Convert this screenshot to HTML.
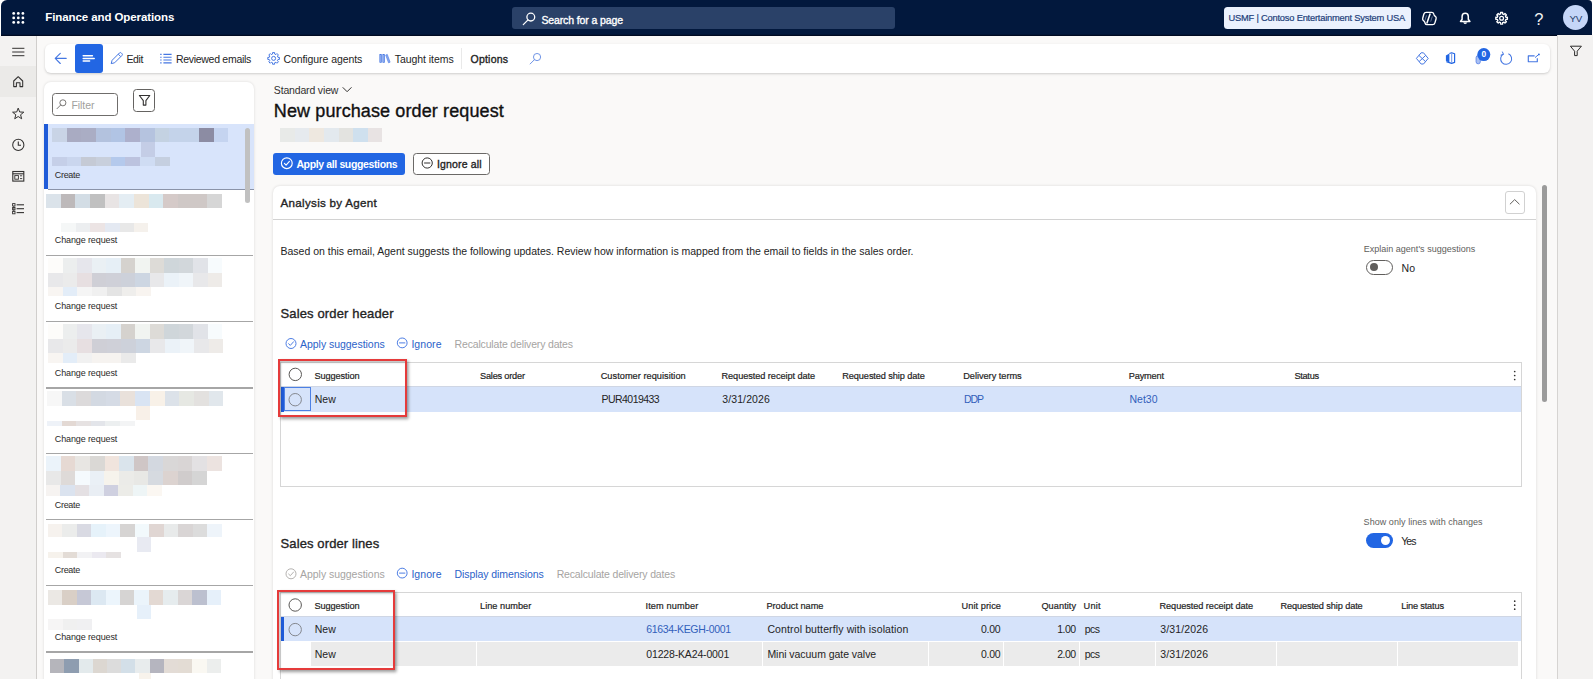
<!DOCTYPE html>
<html lang="en"><head><meta charset="utf-8"><title>New purchase order request - Finance and Operations</title>
<style>
*{box-sizing:border-box;margin:0;padding:0}
html,body{width:1593px;height:679px;overflow:hidden;background:#fff}
body{font-family:"Liberation Sans",Arial,sans-serif;position:relative}
#root{position:absolute;left:0;top:0;width:1593px;height:679px;overflow:hidden;background:#faf9f8}
#root div,#root span,#root svg{position:absolute}
.t{white-space:pre;line-height:1;display:block}
.px{}
svg{overflow:visible}
.sep{left:46.3px;width:206.4px;height:1.25px;background:#a6a6a6}
.gc{top:641.8px;height:24.1px;background:#ebebeb}
</style></head>
<body><div id="root">

<div style="left:0;top:0;width:1593px;height:36px;background:#fff"></div>
<div style="left:1px;top:0;width:1591px;height:35.55px;background:#02183d;border-radius:6px 4px 0 0;box-shadow:inset 0 -1.2px 0 #000a22"></div>
<div style="left:512px;top:7px;width:382.7px;height:22px;background:#2a4168;border-radius:3px"></div>
<div style="left:1223.5px;top:6.6px;width:187px;height:22.5px;background:#ebf1fd;border-radius:3.5px"></div>
<div style="left:1563.2px;top:5.2px;width:25px;height:25px;border-radius:50%;background:#c5d6f8"></div>

<div style="left:0;top:35.5px;width:36.5px;height:644px;background:#f3f2f1;border-right:1px solid #d0cecc"></div>
<div style="left:0;top:66.2px;width:36px;height:30.8px;background:#ebeae8"></div>
<div style="left:1557px;top:35.4px;width:36px;height:644px;background:#f3f2f1;border-left:1px solid #d6d4d2"></div>

<div style="left:44.5px;top:43.9px;width:1505.3px;height:29.4px;background:#fff;border-radius:6px;box-shadow:0 1px 2.5px rgba(0,0,0,.18)"></div>
<div style="left:74.8px;top:43.5px;width:28px;height:29.7px;background:#2266e3;border-radius:3px"></div>
<div style="left:461px;top:48px;width:1px;height:21px;background:#e9e9e9"></div>

<div style="left:44.3px;top:81.8px;width:209.4px;height:610px;background:#fff;border-radius:7px;box-shadow:0 0 3px rgba(0,0,0,.13)"></div>
<div style="left:52.2px;top:93.3px;width:65.7px;height:22.4px;background:#fff;border:1px solid #6f6d6b;border-radius:3.5px"></div>
<div style="left:132.7px;top:89.2px;width:22.8px;height:22.5px;background:#fff;border:1px solid #656361;border-radius:3.5px"></div>
<div style="left:44.3px;top:124.2px;width:209.4px;height:65px;background:#d8e4fb"></div>
<div style="left:44.3px;top:124.2px;width:3.4px;height:65px;background:#1f5bd8"></div>
<div class="sep" style="top:189px;left:47.7px;width:206px;background:#8a93a8"></div>
<div class="sep" style="top:255.2px"></div>
<div class="sep" style="top:321.2px"></div>
<div class="sep" style="top:387.3px"></div>
<div class="sep" style="top:453.2px"></div>
<div class="sep" style="top:519.2px"></div>
<div class="sep" style="top:585.2px"></div>
<div class="sep" style="top:651.4px"></div>
<div style="left:244.8px;top:127.5px;width:5.3px;height:75.8px;background:#c1c1c1;border-radius:3px"></div>

<div style="left:273px;top:152.9px;width:132.2px;height:22.2px;background:#2266e3;border-radius:3px"></div>
<div style="left:413.2px;top:152.9px;width:76.4px;height:22.2px;background:#fff;border:1px solid #6b6967;border-radius:3.5px"></div>

<div style="left:272.6px;top:186px;width:1263.2px;height:520px;background:#fff;border-radius:7px;box-shadow:0 0 3px rgba(0,0,0,.14)"></div>
<div style="left:273px;top:219.2px;width:1262.5px;height:1px;background:#d2d2d2"></div>
<div style="left:1504.6px;top:190.5px;width:20.2px;height:23.2px;border:1px solid #d1d1d1;border-radius:3px;background:#fff"></div>
<div style="left:1542.3px;top:185.4px;width:4.8px;height:216.6px;background:#9b9b9b;border-radius:2.5px"></div>

<div style="left:1366.2px;top:259.9px;width:26.8px;height:14.8px;border:1px solid #605e5c;border-radius:8px;background:#fff"></div>
<div style="left:1369.6px;top:263.2px;width:8.2px;height:8.2px;border-radius:50%;background:#605e5c"></div>
<div style="left:1366.3px;top:533.4px;width:26.5px;height:14.7px;border-radius:8px;background:#2266e3"></div>
<div style="left:1381px;top:536.1px;width:9.3px;height:9.3px;border-radius:50%;background:#fff"></div>

<div style="left:280.3px;top:361.8px;width:1241.5px;height:125px;border:1px solid #d6d6d6;background:#fff"></div>
<div style="left:281.3px;top:386.4px;width:1239.5px;height:25.2px;background:#d6e3fa"></div>
<div style="left:281.3px;top:386.4px;width:2.4px;height:25.2px;background:#1f5bd8"></div>
<div style="left:283.8px;top:386.6px;width:27px;height:24.8px;border:1px solid #4c80e4"></div>

<div style="left:280.3px;top:591.6px;width:1241.5px;height:100px;border:1px solid #d6d6d6;background:#fff"></div>
<div style="left:281.3px;top:616.6px;width:1239.5px;height:24.8px;background:#d6e3fa"></div>
<div style="left:281.3px;top:616.6px;width:2.4px;height:24.8px;background:#1f5bd8"></div>
<div class="gc" style="left:311px;width:164.7px"></div>
<div class="gc" style="left:476.7px;width:285.2px"></div>
<div class="gc" style="left:762.9px;width:165.0px"></div>
<div class="gc" style="left:928.9px;width:74.4px"></div>
<div class="gc" style="left:1004.3px;width:74.3px"></div>
<div class="gc" style="left:1079.6px;width:75.7px"></div>
<div class="gc" style="left:1156.3px;width:119.6px"></div>
<div class="gc" style="left:1276.9px;width:120.0px"></div>
<div class="gc" style="left:1397.9px;width:119.7px"></div>
<div style="left:281.3px;top:616.2px;width:1239.5px;height:1px;background:#cfd6e4"></div>
<div style="left:281.3px;top:386px;width:1239.5px;height:1px;background:#cfd6e4"></div>

<div class="px" style="left:52.0px;top:127.8px;width:176.2px;height:14.5px;background:linear-gradient(90deg,#c9d4e6 0.00px,#c9d4e6 14.68px,#a9abc2 14.68px,#a9abc2 29.37px,#aaadc4 29.37px,#aaadc4 44.05px,#b3c2de 44.05px,#b3c2de 58.73px,#b1c4e4 58.73px,#b1c4e4 73.42px,#adb0cc 73.42px,#adb0cc 88.10px,#b5c3df 88.10px,#b5c3df 102.78px,#c4d2e2 102.78px,#c4d2e2 117.47px,#c4d3ea 117.47px,#c4d3ea 132.15px,#c4d3ea 132.15px,#c4d3ea 146.83px,#8c8ca3 146.83px,#8c8ca3 161.52px,#c5d4f0 161.52px,#c5d4f0 176.20px)"></div>
<div class="px" style="left:140.6px;top:142.3px;width:14.4px;height:14.8px;background:linear-gradient(90deg,#c4cde6 0.00px,#c4cde6 14.40px)"></div>
<div class="px" style="left:52.0px;top:157.1px;width:117.5px;height:9.3px;background:linear-gradient(90deg,#c5cfe8 0.00px,#c5cfe8 14.69px,#cad6ee 14.69px,#cad6ee 29.38px,#c5cad5 29.38px,#c5cad5 44.06px,#c8cfdc 44.06px,#c8cfdc 58.75px,#b4c9ec 58.75px,#b4c9ec 73.44px,#bcc3df 73.44px,#bcc3df 88.12px,#cfdcf3 88.12px,#cfdcf3 102.81px,#c5cfe0 102.81px,#c5cfe0 117.50px)"></div>
<div class="px" style="left:45.8px;top:193.8px;width:176.1px;height:14.4px;background:linear-gradient(90deg,#dbe3ea 0.00px,#dbe3ea 14.68px,#bdb9ba 14.68px,#bdb9ba 29.35px,#d3dde5 29.35px,#d3dde5 44.03px,#c0c0c0 44.03px,#c0c0c0 58.70px,#e8e4e4 58.70px,#e8e4e4 73.38px,#e4edf3 73.38px,#e4edf3 88.05px,#ece4d9 88.05px,#ece4d9 102.73px,#d9e9ef 102.73px,#d9e9ef 117.40px,#d5cac8 117.40px,#d5cac8 132.08px,#cfc8c6 132.08px,#cfc8c6 146.75px,#cfc8c6 146.75px,#cfc8c6 161.43px,#d6d6d6 161.43px,#d6d6d6 176.10px)"></div>
<div class="px" style="left:60.6px;top:222.7px;width:87.9px;height:9.1px;background:linear-gradient(90deg,#f5f7f7 0.00px,#f5f7f7 14.65px,#eceef0 14.65px,#eceef0 29.30px,#ece4e4 29.30px,#ece4e4 43.95px,#e4e9f2 43.95px,#e4e9f2 58.60px,#e8e8e8 58.60px,#e8e8e8 73.25px,#f5f1ec 73.25px,#f5f1ec 87.90px)"></div>
<div class="px" style="left:47.8px;top:258.2px;width:174.1px;height:14.5px;background:linear-gradient(90deg,#fdfcfa 0.00px,#fdfcfa 14.51px,#eceeee 14.51px,#eceeee 29.02px,#e6e6ec 29.02px,#e6e6ec 43.53px,#eaf0f4 43.53px,#eaf0f4 58.03px,#e6eff6 58.03px,#e6eff6 72.54px,#d5d2ce 72.54px,#d5d2ce 87.05px,#f1f4f1 87.05px,#f1f4f1 101.56px,#dddbd7 101.56px,#dddbd7 116.07px,#cfd6da 116.07px,#cfd6da 130.58px,#d2d7db 130.58px,#d2d7db 145.08px,#e1e3e8 145.08px,#e1e3e8 159.59px,#f7fbfd 159.59px,#f7fbfd 174.10px)"></div>
<div class="px" style="left:47.8px;top:272.7px;width:174.1px;height:14.0px;background:linear-gradient(90deg,#e8e8ea 0.00px,#e8e8ea 14.51px,#ebebeb 14.51px,#ebebeb 29.02px,#e7dfe1 29.02px,#e7dfe1 43.53px,#cfcfd6 43.53px,#cfcfd6 58.03px,#cfd0d8 58.03px,#cfd0d8 72.54px,#cdd1da 72.54px,#cdd1da 87.05px,#cdd6e2 87.05px,#cdd6e2 101.56px,#e8e8ea 101.56px,#e8e8ea 116.07px,#ebf2f8 116.07px,#ebf2f8 130.58px,#f0f5f9 130.58px,#f0f5f9 145.08px,#e8e8ea 145.08px,#e8e8ea 159.59px,#eeebe8 159.59px,#eeebe8 174.10px)"></div>
<div class="px" style="left:47.8px;top:286.7px;width:103.2px;height:9.1px;background:linear-gradient(90deg,#f8f5f2 0.00px,#f8f5f2 14.74px,#e3edf8 14.74px,#e3edf8 29.49px,#f5f5f5 29.49px,#f5f5f5 44.23px,#f0f0f0 44.23px,#f0f0f0 58.97px,#e4e4e4 58.97px,#e4e4e4 73.71px,#efeeec 73.71px,#efeeec 88.46px,#f8f4f0 88.46px,#f8f4f0 103.20px)"></div>
<div class="px" style="left:47.8px;top:324.2px;width:174.1px;height:14.5px;background:linear-gradient(90deg,#fdfcfa 0.00px,#fdfcfa 14.51px,#eceeee 14.51px,#eceeee 29.02px,#e6e6ec 29.02px,#e6e6ec 43.53px,#eaf0f4 43.53px,#eaf0f4 58.03px,#e6eff6 58.03px,#e6eff6 72.54px,#d5d2ce 72.54px,#d5d2ce 87.05px,#f1f4f1 87.05px,#f1f4f1 101.56px,#dddbd7 101.56px,#dddbd7 116.07px,#cfd6da 116.07px,#cfd6da 130.58px,#d2d7db 130.58px,#d2d7db 145.08px,#e1e3e8 145.08px,#e1e3e8 159.59px,#f7fbfd 159.59px,#f7fbfd 174.10px)"></div>
<div class="px" style="left:47.8px;top:338.7px;width:175.7px;height:14.3px;background:linear-gradient(90deg,#e8e8ea 0.00px,#e8e8ea 14.64px,#ebebeb 14.64px,#ebebeb 29.28px,#e7dfe1 29.28px,#e7dfe1 43.92px,#cfcfd6 43.92px,#cfcfd6 58.57px,#cfd0d8 58.57px,#cfd0d8 73.21px,#cdd1da 73.21px,#cdd1da 87.85px,#cdd6e2 87.85px,#cdd6e2 102.49px,#e8e8ea 102.49px,#e8e8ea 117.13px,#ebf2f8 117.13px,#ebf2f8 131.77px,#f0f5f9 131.77px,#f0f5f9 146.42px,#e8e8ea 146.42px,#e8e8ea 161.06px,#eeebe8 161.06px,#eeebe8 175.70px)"></div>
<div class="px" style="left:47.8px;top:353.0px;width:88.1px;height:10.0px;background:linear-gradient(90deg,#f8f5f2 0.00px,#f8f5f2 14.68px,#e3edf8 14.68px,#e3edf8 29.37px,#f1f1f1 29.37px,#f1f1f1 44.05px,#f6f3f0 44.05px,#f6f3f0 58.73px,#f6f3f0 58.73px,#f6f3f0 73.42px,#eaeaea 73.42px,#eaeaea 88.10px)"></div>
<div class="px" style="left:47.2px;top:391.3px;width:176.3px;height:14.5px;background:linear-gradient(90deg,#f7f7f7 0.00px,#f7f7f7 14.69px,#d9dfe6 14.69px,#d9dfe6 29.38px,#dcdadb 29.38px,#dcdadb 44.08px,#d3d9e2 44.08px,#d3d9e2 58.77px,#d5dbe5 58.77px,#d5dbe5 73.46px,#e9e1db 73.46px,#e9e1db 88.15px,#d9e4f3 88.15px,#d9e4f3 102.84px,#f8f1e8 102.84px,#f8f1e8 117.53px,#dce2e9 117.53px,#dce2e9 132.23px,#e6e8e3 132.23px,#e6e8e3 146.92px,#e3e1df 146.92px,#e3e1df 161.61px,#e1e7ec 161.61px,#e1e7ec 176.30px)"></div>
<div class="px" style="left:135.9px;top:405.8px;width:14.4px;height:14.4px;background:linear-gradient(90deg,#f8f0e8 0.00px,#f8f0e8 14.40px)"></div>
<div class="px" style="left:47.2px;top:420.6px;width:87.6px;height:5.8px;background:linear-gradient(90deg,#eef2f8 0.00px,#eef2f8 14.60px,#e3d9d4 14.60px,#e3d9d4 29.20px,#e6e2e2 29.20px,#e6e2e2 43.80px,#e3e5ea 43.80px,#e3e5ea 58.40px,#eceff0 58.40px,#eceff0 73.00px,#f3f4f5 73.00px,#f3f4f5 87.60px)"></div>
<div class="px" style="left:46.2px;top:456.1px;width:175.7px;height:14.6px;background:linear-gradient(90deg,#ebf3fa 0.00px,#ebf3fa 14.64px,#e6d9d3 14.64px,#e6d9d3 29.28px,#e8e6e3 29.28px,#e8e6e3 43.92px,#dad8d5 43.92px,#dad8d5 58.57px,#f0e4dd 58.57px,#f0e4dd 73.21px,#dae4ec 73.21px,#dae4ec 87.85px,#cfc6c6 87.85px,#cfc6c6 102.49px,#d3d8e0 102.49px,#d3d8e0 117.13px,#d9d7d7 117.13px,#d9d7d7 131.77px,#d9d5d5 131.77px,#d9d5d5 146.42px,#e3e1e3 146.42px,#e3e1e3 161.06px,#ece3e0 161.06px,#ece3e0 175.70px)"></div>
<div class="px" style="left:46.2px;top:470.7px;width:160.8px;height:14.5px;background:linear-gradient(90deg,#e8e8e8 0.00px,#e8e8e8 14.62px,#dedad8 14.62px,#dedad8 29.24px,#f5fafd 29.24px,#f5fafd 43.85px,#eaf0f6 43.85px,#eaf0f6 58.47px,#f6f3ec 58.47px,#f6f3ec 73.09px,#ebebe8 73.09px,#ebebe8 87.71px,#e8e8e5 87.71px,#e8e8e5 102.33px,#d6dae0 102.33px,#d6dae0 116.95px,#dcd3d0 116.95px,#dcd3d0 131.56px,#d0cccc 131.56px,#d0cccc 146.18px,#d5d5d5 146.18px,#d5d5d5 160.80px)"></div>
<div class="px" style="left:46.2px;top:485.2px;width:115.4px;height:10.7px;background:linear-gradient(90deg,#f6f3f1 0.00px,#f6f3f1 14.42px,#dbe3ef 14.42px,#dbe3ef 28.85px,#e4e0e3 28.85px,#e4e0e3 43.27px,#e9eef4 43.27px,#e9eef4 57.70px,#cfd0e0 57.70px,#cfd0e0 72.12px,#ecece8 72.12px,#ecece8 86.55px,#eef5f6 86.55px,#eef5f6 100.97px,#fbf7f2 100.97px,#fbf7f2 115.40px)"></div>
<div class="px" style="left:48.0px;top:523.7px;width:173.7px;height:13.7px;background:linear-gradient(90deg,#f6f2ee 0.00px,#f6f2ee 14.47px,#ebeceb 14.47px,#ebeceb 28.95px,#d9dae3 28.95px,#d9dae3 43.42px,#e6f2fa 43.42px,#e6f2fa 57.90px,#edf5fc 57.90px,#edf5fc 72.38px,#d6d4d3 72.38px,#d6d4d3 86.85px,#f2f9fc 86.85px,#f2f9fc 101.33px,#e0d6d3 101.33px,#e0d6d3 115.80px,#e8eaea 115.80px,#e8eaea 130.28px,#d9d5d5 130.28px,#d9d5d5 144.75px,#dcdcdc 144.75px,#dcdcdc 159.22px,#eef4fa 159.22px,#eef4fa 173.70px)"></div>
<div class="px" style="left:136.6px;top:537.4px;width:14.4px;height:14.6px;background:linear-gradient(90deg,#e8eaf2 0.00px,#e8eaf2 14.40px)"></div>
<div class="px" style="left:48.0px;top:552.3px;width:72.9px;height:6.2px;background:linear-gradient(90deg,#f6f2ec 0.00px,#f6f2ec 14.58px,#e3dcd6 14.58px,#e3dcd6 29.16px,#f2f2f4 29.16px,#f2f2f4 43.74px,#ebe9f0 43.74px,#ebe9f0 58.32px,#e6e2e2 58.32px,#e6e2e2 72.90px)"></div>
<div class="px" style="left:48.0px;top:589.6px;width:173.0px;height:15.0px;background:linear-gradient(90deg,#ebe8e4 0.00px,#ebe8e4 14.42px,#d9cfc6 14.42px,#d9cfc6 28.83px,#c6c8d6 28.83px,#c6c8d6 43.25px,#dce8f2 43.25px,#dce8f2 57.67px,#ecf5fc 57.67px,#ecf5fc 72.08px,#d6d4d3 72.08px,#d6d4d3 86.50px,#ebf4fb 86.50px,#ebf4fb 100.92px,#e3d9d3 100.92px,#e3d9d3 115.33px,#e6ecee 115.33px,#e6ecee 129.75px,#dad6d6 129.75px,#dad6d6 144.17px,#bcc0cf 144.17px,#bcc0cf 158.58px,#e6f0fa 158.58px,#e6f0fa 173.00px)"></div>
<div class="px" style="left:136.6px;top:604.6px;width:14.4px;height:14.4px;background:linear-gradient(90deg,#e6f0fa 0.00px,#e6f0fa 14.40px)"></div>
<div class="px" style="left:48.0px;top:619.0px;width:43.8px;height:11.0px;background:linear-gradient(90deg,#f6f5f5 0.00px,#f6f5f5 14.60px,#f0f0f0 14.60px,#f0f0f0 29.20px,#f0f0f2 29.20px,#f0f0f2 43.80px)"></div>
<div class="px" style="left:50.0px;top:658.6px;width:171.0px;height:14.4px;background:linear-gradient(90deg,#b5b5bb 0.00px,#b5b5bb 14.25px,#8e9db0 14.25px,#8e9db0 28.50px,#e3eaec 28.50px,#e3eaec 42.75px,#dcd7d1 42.75px,#dcd7d1 57.00px,#dcdcdc 57.00px,#dcdcdc 71.25px,#d3dfe8 71.25px,#d3dfe8 85.50px,#e8eced 85.50px,#e8eced 99.75px,#b5b5bf 99.75px,#b5b5bf 114.00px,#e3dcd6 114.00px,#e3dcd6 128.25px,#e3dcd4 128.25px,#e3dcd4 142.50px,#faf8f2 142.50px,#faf8f2 156.75px,#eceeed 156.75px,#eceeed 171.00px)"></div>
<div class="px" style="left:139.0px;top:673.0px;width:12.0px;height:6.0px;background:linear-gradient(90deg,#f8f3ec 0.00px,#f8f3ec 12.00px)"></div>
<div class="px" style="left:279.6px;top:127.7px;width:102.4px;height:14.6px;background:linear-gradient(90deg,#e8eae8 0.00px,#e8eae8 14.63px,#e6eaee 14.63px,#e6eaee 29.26px,#eee8e0 29.26px,#eee8e0 43.89px,#e3e9ee 43.89px,#e3e9ee 58.51px,#e3e3e0 58.51px,#e3e3e0 73.14px,#cfe0ee 73.14px,#cfe0ee 87.77px,#e8e3e3 87.77px,#e8e3e3 102.40px)"></div>
<svg style="left:0;top:0" width="1593" height="679" viewBox="0 0 1593 679" fill="none"><circle cx="13.7" cy="13.4" r="1.4" fill="#ffffff"/><circle cx="13.7" cy="17.9" r="1.4" fill="#ffffff"/><circle cx="13.7" cy="22.4" r="1.4" fill="#ffffff"/><circle cx="18.3" cy="13.4" r="1.4" fill="#ffffff"/><circle cx="18.3" cy="17.9" r="1.4" fill="#ffffff"/><circle cx="18.3" cy="22.4" r="1.4" fill="#ffffff"/><circle cx="22.9" cy="13.4" r="1.4" fill="#ffffff"/><circle cx="22.9" cy="17.9" r="1.4" fill="#ffffff"/><circle cx="22.9" cy="22.4" r="1.4" fill="#ffffff"/><circle cx="530.80" cy="17.10" r="3.90" stroke="#ffffff" stroke-width="1.3"/><path d="M528.04 19.86 L523.30 24.60" stroke="#ffffff" stroke-width="1.3" stroke-linecap="round"/><path d="M1426.2 12.3 h5.6 q1.5 0 1.9 1.4 l0.4 1.2 q0.3 0.8 1 1.2 q1.5 0.9 1 2.6 l-1.2 4.2 q-0.5 1.7 -2.3 1.7 h-5.6 q-1.5 0 -1.9 -1.4 l-0.4 -1.2 q-0.3 -0.8 -1 -1.2 q-1.5 -0.9 -1 -2.6 l1.2 -4.2 q0.5 -1.7 2.3 -1.7z" stroke="#ffffff" stroke-width="1.35" stroke-linejoin="round"/><path d="M1430.2 13.4 L1426.8 23.6" stroke="#ffffff" stroke-width="1.5"/><path d="M1426.5 15.4 L1424.9 20.6 M1432.3 16.4 L1430.7 21.6" stroke="#6d7c98" stroke-width="0.9"/><path d="M1460.5 21.5 h9.4 l-1.6 -2.2 v-2.9 a3.1 3.1 0 0 0 -6.2 0 v2.9z" stroke="#ffffff" stroke-width="1.5" stroke-linejoin="round"/><path d="M1463.6 22.7 a1.7 1.4 0 0 0 3.2 0z" fill="#ffffff" stroke="#ffffff" stroke-width="0.6"/><path d="M1507.41 17.26 L1507.41 19.34 L1505.88 19.32 L1505.35 20.61 L1506.44 21.67 L1504.97 23.14 L1503.91 22.05 L1502.62 22.58 L1502.64 24.11 L1500.56 24.11 L1500.58 22.58 L1499.29 22.05 L1498.23 23.14 L1496.76 21.67 L1497.85 20.61 L1497.32 19.32 L1495.79 19.34 L1495.79 17.26 L1497.32 17.28 L1497.85 15.99 L1496.76 14.93 L1498.23 13.46 L1499.29 14.55 L1500.58 14.02 L1500.56 12.49 L1502.64 12.49 L1502.62 14.02 L1503.91 14.55 L1504.97 13.46 L1506.44 14.93 L1505.35 15.99 L1505.88 17.28Z" stroke="#ffffff" stroke-width="1.3" stroke-linejoin="round"/><circle cx="1501.6" cy="18.3" r="1.9" stroke="#ffffff" stroke-width="1.3"/><path d="M12.2 48.3 H24.4" stroke="#323130" stroke-width="1.0"/><path d="M12.2 52 H24.4" stroke="#323130" stroke-width="1.0"/><path d="M12.2 55.7 H24.4" stroke="#323130" stroke-width="1.0"/><path d="M13.7 81 L18.2 76.7 L22.7 81 V86.6 H20 V82.8 H16.4 V86.6 H13.7Z" stroke="#323130" stroke-width="1.05" stroke-linejoin="round"/><path d="M18.20 108.10 L19.67 111.98 L23.81 112.18 L20.58 114.77 L21.67 118.77 L18.20 116.50 L14.73 118.77 L15.82 114.77 L12.59 112.18 L16.73 111.98Z" stroke="#323130" stroke-width="1.0" stroke-linejoin="round"/><circle cx="18.3" cy="144.9" r="5.6" stroke="#323130" stroke-width="1.05"/><path d="M18.3 141.4 V145.2 H21" stroke="#323130" stroke-width="1.1"/><rect x="12.8" y="171.5" width="11" height="9.6" stroke="#323130" stroke-width="1.1"/><path d="M12.8 173.8 H23.8" stroke="#323130" stroke-width="1.1"/><rect x="14.8" y="175.6" width="3.6" height="3.6" stroke="#323130" stroke-width="0.9"/><path d="M20 175.8 H22.2 M20 178.6 H22.2" stroke="#323130" stroke-width="0.9"/><rect x="12.6" y="203.60000000000002" width="2.4" height="2.4" stroke="#323130" stroke-width="0.9"/><path d="M16.6 204.8 H24" stroke="#323130" stroke-width="1.1"/><rect x="12.6" y="207.5" width="2.4" height="2.4" stroke="#323130" stroke-width="0.9"/><path d="M16.6 208.7 H24" stroke="#323130" stroke-width="1.1"/><rect x="12.6" y="211.4" width="2.4" height="2.4" stroke="#323130" stroke-width="0.9"/><path d="M16.6 212.6 H24" stroke="#323130" stroke-width="1.1"/><path d="M13.8 206 V211.4" stroke="#323130" stroke-width="0.8"/><path d="M66.2 58.4 H55.4 M60.3 53.3 L55.2 58.4 L60.3 63.5" stroke="#4577e2" stroke-width="1.1" stroke-linecap="round" stroke-linejoin="round"/><path d="M83.2 55.7 H92.4 M83.2 58.4 H94.2 M83.2 61.1 H89.6" stroke="#ffffff" stroke-width="1.5" stroke-linecap="round"/><path d="M111.2 63.6 l0.9 -3.3 l7.3 -7.3 a1.3 1.3 0 0 1 1.9 0 l0.6 0.6 a1.3 1.3 0 0 1 0 1.9 l-7.3 7.3z M118.3 54.2 l2.4 2.4" stroke="#4577e2" stroke-width="1.0" stroke-linejoin="round"/><path d="M160.2 54.4 H161.6 M163.4 54.4 H171.6" stroke="#4577e2" stroke-width="1.15"/><path d="M160.2 57.2 H161.6 M163.4 57.2 H171.6" stroke="#4577e2" stroke-width="1.15"/><path d="M160.2 60 H161.6 M163.4 60 H171.6" stroke="#4577e2" stroke-width="1.15"/><path d="M160.2 62.8 H161.6 M163.4 62.8 H171.6" stroke="#4577e2" stroke-width="1.15"/><path d="M279.41 57.36 L279.41 59.44 L277.98 59.44 L277.43 60.76 L278.44 61.77 L276.97 63.24 L275.96 62.23 L274.64 62.78 L274.64 64.21 L272.56 64.21 L272.56 62.78 L271.24 62.23 L270.23 63.24 L268.76 61.77 L269.77 60.76 L269.22 59.44 L267.79 59.44 L267.79 57.36 L269.22 57.36 L269.77 56.04 L268.76 55.03 L270.23 53.56 L271.24 54.57 L272.56 54.02 L272.56 52.59 L274.64 52.59 L274.64 54.02 L275.96 54.57 L276.97 53.56 L278.44 55.03 L277.43 56.04 L277.98 57.36Z" stroke="#4577e2" stroke-width="1.0" stroke-linejoin="round"/><circle cx="273.6" cy="58.4" r="2.0" stroke="#4577e2" stroke-width="1.0"/><rect x="379.8" y="54.5" width="1.9" height="8.1" fill="#8eabef" stroke="#4577e2" stroke-width="0.6"/><rect x="382.8" y="54.5" width="1.9" height="8.1" fill="#8eabef" stroke="#4577e2" stroke-width="0.6"/><path d="M385.7 55 L387.3 54.4 L390.1 62.2 L388.5 62.8Z" fill="#8eabef" stroke="#4577e2" stroke-width="0.6" stroke-linejoin="round"/><circle cx="537.05" cy="57.05" r="3.59" stroke="#6f94e6" stroke-width="1.0"/><path d="M534.51 59.59 L530.15 63.95" stroke="#6f94e6" stroke-width="1.0" stroke-linecap="round"/><path d="M1416.3999999999999 58.4 L1421.1 52.8 H1423.5 L1428.2 58.4 L1423.5 64.0 H1421.1Z M1418.8999999999999 55.4 L1425.5 61.6 M1425.7 55.4 L1419.1 61.6" stroke="#4577e2" stroke-width="1.0" stroke-linejoin="round"/><path d="M1445.9 55.6 L1449.4 53.6 V62.6 L1445.9 60.800000000000004Z" fill="#2266e3"/><path d="M1449.4 53.5 L1451.6 52.800000000000004 L1454.6 53.800000000000004 V62.400000000000006 L1451.6 63.400000000000006 L1446.4 61.6" stroke="#2266e3" stroke-width="1.2" stroke-linejoin="round"/><path d="M1451.7 53.400000000000006 V62.800000000000004" stroke="#6f94e8" stroke-width="1.0"/><rect x="1476.1" y="55.6" width="4.2" height="8.2" rx="2" fill="#a9c0f3" stroke="#5d86e6" stroke-width="0.9"/><circle cx="1483.8" cy="54.6" r="6.5" fill="#2266e3"/><path d="M1508.4 53.8 A5.5 5.5 0 1 1 1503.3 54.099999999999994" stroke="#4577e2" stroke-width="1.05"/><path d="M1502.3 51.599999999999994 L1503.5 54.4 L1500.6000000000001 55.199999999999996" stroke="#4577e2" stroke-width="1.0" stroke-linejoin="round"/><path d="M1534.6 55.9 H1528.3 V61.7 H1537.3 V58.2" stroke="#4577e2" stroke-width="1.15" stroke-linejoin="round"/><path d="M1535 57.6 L1538.6 54.6" stroke="#4577e2" stroke-width="1.0"/><circle cx="1538.9" cy="54.4" r="0.9" fill="#2266e3"/><path d="M1570.40 46.20 H1581.40 L1577.20 51.20 V55.60 H1574.60 V51.20 Z" stroke="#2b2a29" stroke-width="1.0" stroke-linejoin="round"/><circle cx="62.88" cy="102.82" r="3.04" stroke="#7a7876" stroke-width="1.0"/><path d="M60.73 104.97 L57.03 108.67" stroke="#7a7876" stroke-width="1.0" stroke-linecap="round"/><path d="M139.40 95.50 H149.80 L145.90 100.60 V105.10 H143.30 V100.60 Z" stroke="#323130" stroke-width="1.1" stroke-linejoin="round"/><path d="M343 87.6 L347.1 91.7 L351.2 87.6" stroke="#323130" stroke-width="1.0" stroke-linecap="round" stroke-linejoin="round"/><path d="M1510.2 204 L1514.7 199.6 L1519.2 204" stroke="#605e5c" stroke-width="1.0" stroke-linecap="round" stroke-linejoin="round"/><circle cx="286.8" cy="163.2" r="5.4" stroke="#ffffff" stroke-width="1.15"/><path d="M284.40000000000003 163.39999999999998 L286.1 165.1 L289.40000000000003 161.39999999999998" stroke="#ffffff" stroke-width="1.15" stroke-linecap="round" stroke-linejoin="round"/><circle cx="427.2" cy="163" r="5.1" stroke="#323130" stroke-width="1.0"/><path d="M424.5 163 L429.9 163" stroke="#323130" stroke-width="1.0" stroke-linecap="round"/><circle cx="291" cy="343.5" r="5.0" stroke="#4577e2" stroke-width="0.95"/><path d="M288.6 343.7 L290.3 345.4 L293.6 341.7" stroke="#4577e2" stroke-width="0.95" stroke-linecap="round" stroke-linejoin="round"/><circle cx="402.2" cy="342.9" r="4.9" stroke="#4577e2" stroke-width="0.95"/><path d="M399.5 342.9 L404.9 342.9" stroke="#4577e2" stroke-width="0.95" stroke-linecap="round"/><circle cx="291" cy="573.8" r="5.0" stroke="#b0aeac" stroke-width="0.95"/><path d="M288.6 574.0 L290.3 575.6999999999999 L293.6 572.0" stroke="#b0aeac" stroke-width="0.95" stroke-linecap="round" stroke-linejoin="round"/><circle cx="402.2" cy="573.1" r="4.9" stroke="#4577e2" stroke-width="0.95"/><path d="M399.5 573.1 L404.9 573.1" stroke="#4577e2" stroke-width="0.95" stroke-linecap="round"/><circle cx="295.3" cy="374.4" r="6.2" stroke="#5a5856" stroke-width="1" fill="none"/><circle cx="295.2" cy="399.7" r="6.2" stroke="#85888f" stroke-width="1" fill="none"/><circle cx="295.2" cy="605" r="6.2" stroke="#5a5856" stroke-width="1" fill="none"/><circle cx="295.2" cy="629.6" r="6.2" stroke="#85888f" stroke-width="1" fill="none"/><circle cx="1514.7" cy="371.5" r="0.85" fill="#323130"/><circle cx="1514.7" cy="375.5" r="0.85" fill="#323130"/><circle cx="1514.7" cy="379.5" r="0.85" fill="#323130"/><circle cx="1514.7" cy="601.2" r="0.85" fill="#323130"/><circle cx="1514.7" cy="605.2" r="0.85" fill="#323130"/><circle cx="1514.7" cy="609.2" r="0.85" fill="#323130"/></svg>
<span class="t" style="left:45.3px;top:12.27px;font-size:11.5px;letter-spacing:-0.095px;color:#ffffff;font-weight:700;">Finance and Operations</span>
<span class="t" style="left:541.4px;top:14.61px;font-size:10.5px;letter-spacing:-0.112px;color:#ffffff;font-weight:400;-webkit-text-stroke:0.35px currentColor;">Search for a page</span>
<span class="t" style="left:1228.5px;top:14.13px;font-size:9.3px;letter-spacing:-0.200px;color:#22407a;font-weight:400;-webkit-text-stroke:0.2px currentColor;">USMF | Contoso Entertainment System USA</span>
<span class="t" style="left:1569.5px;top:13.70px;font-size:9.8px;letter-spacing:-0.378px;color:#1f3a68;font-weight:400;">YV</span>
<span class="t" style="left:126.4px;top:54.36px;font-size:10.5px;letter-spacing:-0.365px;color:#242424;font-weight:400;">Edit</span>
<span class="t" style="left:175.9px;top:54.36px;font-size:10.5px;letter-spacing:-0.284px;color:#242424;font-weight:400;">Reviewed emails</span>
<span class="t" style="left:283.4px;top:54.36px;font-size:10.5px;letter-spacing:-0.066px;color:#242424;font-weight:400;">Configure agents</span>
<span class="t" style="left:394.7px;top:54.36px;font-size:10.5px;letter-spacing:-0.048px;color:#242424;font-weight:400;">Taught items</span>
<span class="t" style="left:470.5px;top:54.36px;font-size:10.5px;letter-spacing:0.219px;color:#242424;font-weight:400;-webkit-text-stroke:0.35px currentColor;">Options</span>
<span class="t" style="left:1481.4px;top:50.49px;font-size:8.4px;letter-spacing:0.128px;color:#ffffff;font-weight:700;">0</span>
<span class="t" style="left:71.5px;top:100.21px;font-size:10.5px;letter-spacing:-0.069px;color:#a19f9d;font-weight:400;">Filter</span>
<span class="t" style="left:54.8px;top:170.88px;font-size:9px;letter-spacing:-0.323px;color:#2b2a29;font-weight:400;">Create</span>
<span class="t" style="left:54.8px;top:236.38px;font-size:9px;letter-spacing:-0.119px;color:#2b2a29;font-weight:400;">Change request</span>
<span class="t" style="left:54.8px;top:302.38px;font-size:9px;letter-spacing:-0.119px;color:#2b2a29;font-weight:400;">Change request</span>
<span class="t" style="left:54.8px;top:368.78px;font-size:9px;letter-spacing:-0.119px;color:#2b2a29;font-weight:400;">Change request</span>
<span class="t" style="left:54.8px;top:434.68px;font-size:9px;letter-spacing:-0.119px;color:#2b2a29;font-weight:400;">Change request</span>
<span class="t" style="left:54.8px;top:500.58px;font-size:9px;letter-spacing:-0.323px;color:#2b2a29;font-weight:400;">Create</span>
<span class="t" style="left:54.8px;top:566.48px;font-size:9px;letter-spacing:-0.323px;color:#2b2a29;font-weight:400;">Create</span>
<span class="t" style="left:54.8px;top:632.58px;font-size:9px;letter-spacing:-0.119px;color:#2b2a29;font-weight:400;">Change request</span>
<span class="t" style="left:273.8px;top:84.51px;font-size:10.5px;letter-spacing:-0.162px;color:#323130;font-weight:400;">Standard view</span>
<span class="t" style="left:273.8px;top:102.26px;font-size:18px;letter-spacing:0.115px;color:#111111;font-weight:400;-webkit-text-stroke:0.35px currentColor;">New purchase order request</span>
<span class="t" style="left:296.4px;top:159.11px;font-size:10.5px;letter-spacing:-0.367px;color:#ffffff;font-weight:700;">Apply all suggestions</span>
<span class="t" style="left:437.0px;top:159.11px;font-size:10.5px;letter-spacing:0.144px;color:#242424;font-weight:400;-webkit-text-stroke:0.35px currentColor;">Ignore all</span>
<span class="t" style="left:280.6px;top:197.08px;font-size:11.6px;letter-spacing:0.293px;color:#242424;font-weight:400;-webkit-text-stroke:0.35px currentColor;">Analysis by Agent</span>
<span class="t" style="left:280.5px;top:245.51px;font-size:10.5px;letter-spacing:-0.006px;color:#242424;font-weight:400;">Based on this email, Agent suggests the following updates. Review how information is mapped from the email to fields in the sales order.</span>
<span class="t" style="left:1363.7px;top:244.68px;font-size:9px;letter-spacing:0.012px;color:#605e5c;font-weight:400;">Explain agent's suggestions</span>
<span class="t" style="left:1401.4px;top:262.81px;font-size:10.5px;letter-spacing:0.162px;color:#242424;font-weight:400;">No</span>
<span class="t" style="left:280.5px;top:307.00px;font-size:13px;letter-spacing:0.142px;color:#242424;font-weight:400;-webkit-text-stroke:0.35px currentColor;">Sales order header</span>
<span class="t" style="left:300.0px;top:338.61px;font-size:10.5px;letter-spacing:-0.033px;color:#2b62c9;font-weight:400;">Apply suggestions</span>
<span class="t" style="left:411.4px;top:338.61px;font-size:10.5px;letter-spacing:0.064px;color:#2b62c9;font-weight:400;">Ignore</span>
<span class="t" style="left:454.6px;top:338.61px;font-size:10.5px;letter-spacing:-0.167px;color:#a6a4a2;font-weight:400;">Recalculate delivery dates</span>
<span class="t" style="left:314.4px;top:371.71px;font-size:9.2px;letter-spacing:-0.087px;color:#242424;font-weight:400;-webkit-text-stroke:0.2px currentColor;">Suggestion</span>
<span class="t" style="left:480.0px;top:371.71px;font-size:9.2px;letter-spacing:-0.198px;color:#242424;font-weight:400;-webkit-text-stroke:0.2px currentColor;">Sales order</span>
<span class="t" style="left:600.7px;top:371.71px;font-size:9.2px;letter-spacing:0.039px;color:#242424;font-weight:400;-webkit-text-stroke:0.2px currentColor;">Customer requisition</span>
<span class="t" style="left:721.5px;top:371.71px;font-size:9.2px;letter-spacing:-0.063px;color:#242424;font-weight:400;-webkit-text-stroke:0.2px currentColor;">Requested receipt date</span>
<span class="t" style="left:842.3px;top:371.71px;font-size:9.2px;letter-spacing:-0.099px;color:#242424;font-weight:400;-webkit-text-stroke:0.2px currentColor;">Requested ship date</span>
<span class="t" style="left:963.2px;top:371.71px;font-size:9.2px;letter-spacing:-0.017px;color:#242424;font-weight:400;-webkit-text-stroke:0.2px currentColor;">Delivery terms</span>
<span class="t" style="left:1128.8px;top:371.71px;font-size:9.2px;letter-spacing:-0.178px;color:#242424;font-weight:400;-webkit-text-stroke:0.2px currentColor;">Payment</span>
<span class="t" style="left:1294.4px;top:371.71px;font-size:9.2px;letter-spacing:-0.269px;color:#242424;font-weight:400;-webkit-text-stroke:0.2px currentColor;">Status</span>
<span class="t" style="left:314.7px;top:393.91px;font-size:10.5px;letter-spacing:0.042px;color:#242424;font-weight:400;">New</span>
<span class="t" style="left:601.5px;top:393.91px;font-size:10.5px;letter-spacing:-0.539px;color:#242424;font-weight:400;">PUR4019433</span>
<span class="t" style="left:722.3px;top:393.91px;font-size:10.5px;letter-spacing:0.098px;color:#242424;font-weight:400;">3/31/2026</span>
<span class="t" style="left:964.0px;top:393.91px;font-size:10.5px;letter-spacing:-1.086px;color:#325fba;font-weight:400;">DDP</span>
<span class="t" style="left:1129.4px;top:393.91px;font-size:10.5px;letter-spacing:0.042px;color:#325fba;font-weight:400;">Net30</span>
<span class="t" style="left:1363.6px;top:517.68px;font-size:9px;letter-spacing:0.053px;color:#605e5c;font-weight:400;">Show only lines with changes</span>
<span class="t" style="left:1401.2px;top:536.41px;font-size:10.5px;letter-spacing:-0.970px;color:#242424;font-weight:400;">Yes</span>
<span class="t" style="left:280.5px;top:537.00px;font-size:13px;letter-spacing:0.117px;color:#242424;font-weight:400;-webkit-text-stroke:0.35px currentColor;">Sales order lines</span>
<span class="t" style="left:300.0px;top:569.11px;font-size:10.5px;letter-spacing:-0.033px;color:#a6a4a2;font-weight:400;">Apply suggestions</span>
<span class="t" style="left:411.4px;top:569.11px;font-size:10.5px;letter-spacing:0.064px;color:#2b62c9;font-weight:400;">Ignore</span>
<span class="t" style="left:454.6px;top:569.11px;font-size:10.5px;letter-spacing:-0.081px;color:#2b62c9;font-weight:400;">Display dimensions</span>
<span class="t" style="left:556.7px;top:569.11px;font-size:10.5px;letter-spacing:-0.163px;color:#a6a4a2;font-weight:400;">Recalculate delivery dates</span>
<span class="t" style="left:314.4px;top:602.01px;font-size:9.2px;letter-spacing:-0.087px;color:#242424;font-weight:400;-webkit-text-stroke:0.2px currentColor;">Suggestion</span>
<span class="t" style="left:480.0px;top:602.01px;font-size:9.2px;letter-spacing:0.022px;color:#242424;font-weight:400;-webkit-text-stroke:0.2px currentColor;">Line number</span>
<span class="t" style="left:645.5px;top:602.01px;font-size:9.2px;letter-spacing:0.122px;color:#242424;font-weight:400;-webkit-text-stroke:0.2px currentColor;">Item number</span>
<span class="t" style="left:766.4px;top:602.01px;font-size:9.2px;letter-spacing:-0.018px;color:#242424;font-weight:400;-webkit-text-stroke:0.2px currentColor;">Product name</span>
<span class="t" style="left:961.6px;top:602.01px;font-size:9.2px;letter-spacing:0.065px;color:#242424;font-weight:400;-webkit-text-stroke:0.2px currentColor;">Unit price</span>
<span class="t" style="left:1041.4px;top:602.01px;font-size:9.2px;letter-spacing:0.069px;color:#242424;font-weight:400;-webkit-text-stroke:0.2px currentColor;">Quantity</span>
<span class="t" style="left:1083.6px;top:602.01px;font-size:9.2px;letter-spacing:0.185px;color:#242424;font-weight:400;-webkit-text-stroke:0.2px currentColor;">Unit</span>
<span class="t" style="left:1159.5px;top:602.01px;font-size:9.2px;letter-spacing:-0.063px;color:#242424;font-weight:400;-webkit-text-stroke:0.2px currentColor;">Requested receipt date</span>
<span class="t" style="left:1280.4px;top:602.01px;font-size:9.2px;letter-spacing:-0.110px;color:#242424;font-weight:400;-webkit-text-stroke:0.2px currentColor;">Requested ship date</span>
<span class="t" style="left:1401.2px;top:602.01px;font-size:9.2px;letter-spacing:-0.164px;color:#242424;font-weight:400;-webkit-text-stroke:0.2px currentColor;">Line status</span>
<span class="t" style="left:314.7px;top:624.31px;font-size:10.5px;letter-spacing:0.042px;color:#242424;font-weight:400;">New</span>
<span class="t" style="left:646.3px;top:624.31px;font-size:10.5px;letter-spacing:-0.329px;color:#325fba;font-weight:400;">61634-KEGH-0001</span>
<span class="t" style="left:767.4px;top:624.31px;font-size:10.5px;letter-spacing:0.124px;color:#242424;font-weight:400;">Control butterfly with isolation</span>
<span class="t" style="left:981.0px;top:624.31px;font-size:10.5px;letter-spacing:-0.312px;color:#242424;font-weight:400;">0.00</span>
<span class="t" style="left:1057.3px;top:624.31px;font-size:10.5px;letter-spacing:-0.546px;color:#242424;font-weight:400;">1.00</span>
<span class="t" style="left:1084.7px;top:624.31px;font-size:10.5px;letter-spacing:-0.522px;color:#242424;font-weight:400;">pcs</span>
<span class="t" style="left:1160.3px;top:624.31px;font-size:10.5px;letter-spacing:0.123px;color:#242424;font-weight:400;">3/31/2026</span>
<span class="t" style="left:314.7px;top:649.11px;font-size:10.5px;letter-spacing:0.042px;color:#242424;font-weight:400;">New</span>
<span class="t" style="left:646.3px;top:649.11px;font-size:10.5px;letter-spacing:-0.161px;color:#242424;font-weight:400;">01228-KA24-0001</span>
<span class="t" style="left:767.4px;top:649.11px;font-size:10.5px;letter-spacing:-0.044px;color:#242424;font-weight:400;">Mini vacuum gate valve</span>
<span class="t" style="left:981.0px;top:649.11px;font-size:10.5px;letter-spacing:-0.312px;color:#242424;font-weight:400;">0.00</span>
<span class="t" style="left:1057.3px;top:649.11px;font-size:10.5px;letter-spacing:-0.546px;color:#242424;font-weight:400;">2.00</span>
<span class="t" style="left:1084.7px;top:649.11px;font-size:10.5px;letter-spacing:-0.522px;color:#242424;font-weight:400;">pcs</span>
<span class="t" style="left:1160.3px;top:649.11px;font-size:10.5px;letter-spacing:0.123px;color:#242424;font-weight:400;">3/31/2026</span>
<span class="t" style="left:1534.2px;top:11.03px;font-size:16.5px;letter-spacing:-0.988px;color:#f0f0f0;font-weight:400;">?</span>

<div style="left:278.3px;top:359.2px;width:128.6px;height:58.1px;border:2px solid #e53b3b;box-shadow:1.5px 2px 3px rgba(0,0,0,.4), inset 1px 1.5px 2px rgba(0,0,0,.25)"></div>
<div style="left:277.3px;top:589.5px;width:117.7px;height:80.1px;border:2px solid #e53b3b;box-shadow:1.5px 2px 3px rgba(0,0,0,.4), inset 1px 1.5px 2px rgba(0,0,0,.25)"></div>

</div></body></html>
